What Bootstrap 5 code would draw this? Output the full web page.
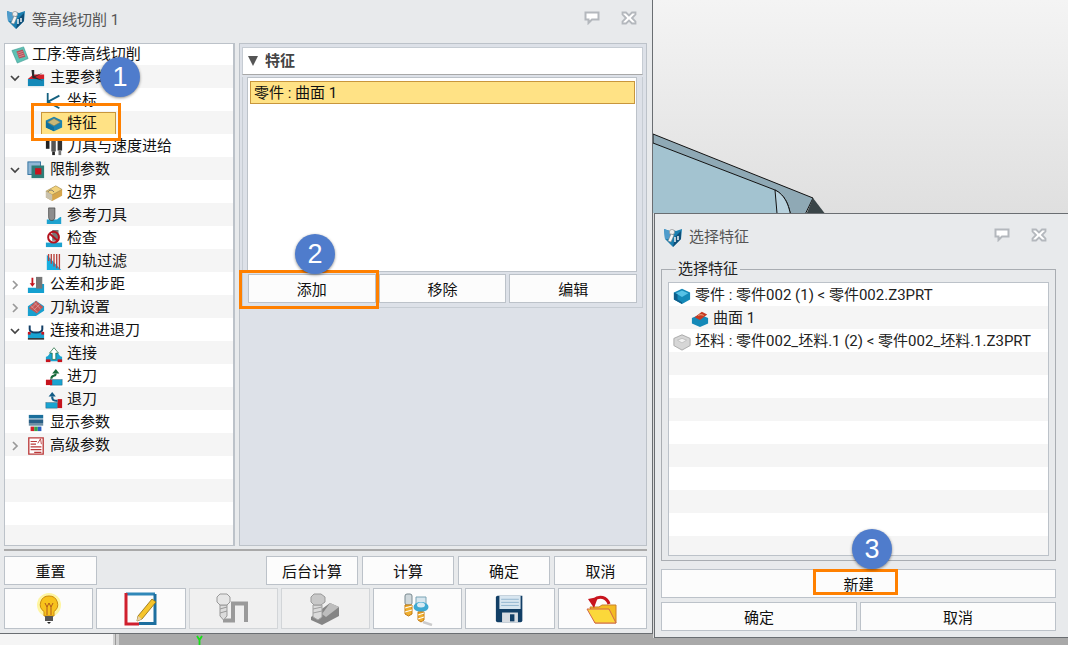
<!DOCTYPE html>
<html lang="zh">
<head>
<meta charset="UTF-8">
<title>等高线切削</title>
<link rel="stylesheet" href="https://cdn.jsdelivr.net/npm/bootstrap@5.3.0/dist/css/bootstrap.min.css">
<style>
body { margin: 0; background: #aaa; font-family: Roboto, "Noto Sans CJK SC", sans-serif; font-size: 15px; color: #111; overflow: hidden; }
.desk { position: relative; width: 1068px; height: 645px; overflow: hidden; background: #a9a9a9; }
.scene { position: absolute; left: 0; top: 0; }
.win { position: absolute; background: #e8eaec; border: 1px solid #6a6e72; }
.win-main { left: -1px; top: -1px; width: 654px; height: 635px; padding: 0 5px 0 4px; }
.win-pick { left: 654px; top: 213px; width: 416px; height: 425px; padding: 0 13px 0 6px; }
.title-main { height: 43px; color: #555; padding-left: 2px; padding-bottom: 5px; gap: 6px; flex-shrink: 0; }
.title-pick { height: 45px; color: #555; padding-left: 2px; gap: 6px; flex-shrink: 0; }
.title-text { padding-top: 2px; }
.title-btns { margin-left: auto; gap: 21px; }
.title-main .title-btns { margin-right: 10px; margin-top: -2px; }
.title-pick .title-btns { margin-right: 9px; margin-top: -3px; }
.tree { width: 231px; height: 503px; background: #fff; border: 1px solid #bcc2c9; border-right-width: 2px; border-radius: 0; overflow: hidden; }
.tree-row { height: 23px; padding: 2px 0 0 0; border: 0; border-radius: 0; background: #fff; color: #111; line-height: 21px; white-space: nowrap; flex-shrink: 0; }
.tree > .tree-row:first-child { height: 21px; padding-top: 0; }
.tree-row:nth-child(even), .pick-list .tree-row:nth-child(even) { background: #f5f5f5; }
.tree-row svg { flex-shrink: 0; }
.lv-root { padding-left: 6px; gap: 3px; }
.lv-one { padding-left: 3px; gap: 5px; }
.lv-one .chev { width: 14px; }
.lv-two { padding-left: 40px; gap: 4px; }
.sel-tag { background: #ffe285; border: 1px solid #c8963c; height: 23px; padding: 0 18px 0 3px; margin-left: -4px; margin-top: 0; line-height: 21px; gap: 4px; }
.panel { width: 408px; height: 503px; background: #dde1e8; border: 1px solid #bcc2c9; padding: 3px 3px 3px 2px; }
.feat-box { height: 231px; border: 1px solid #c6ccd3; border-top: 0; background: #dde1e8; }
.feat-head { height: 28px; background: #fff; border: 1px solid #c6ccd3; border-bottom: 1px solid #a8a8a8; font-weight: 700; color: #444; padding-left: 4px; gap: 6px; }
.feat-list { margin: 2px 5px 0 4px; height: 195px; background: #fff; border: 1px solid #bcc2c9; padding: 3px 1px 3px 2px; }
.feat-item { height: 23px; background: #ffe285; border: 1px solid #c8963c; padding-left: 3px; line-height: 23px; }
.feat-btns { padding: 2px 5px 0 5px; gap: 3px; }
.sw-btn { --bs-btn-padding-y: 0; --bs-btn-padding-x: 0; --bs-btn-font-size: 15px; --bs-btn-border-radius: 0; --bs-btn-border-color: #bcc2c9; --bs-btn-bg: #fcfcfc; --bs-btn-color: #111; height: 29px; line-height: 31px; font-family: inherit; flex-shrink: 0; }
.btn-wide { flex: 1 1 0; }
.rule { height: 2px; background: #a9a9a9; margin: 3px 0 5px 0; flex-shrink: 0; }
.foot-row { gap: 4px; }
.w-reset { width: 93px; margin-right: auto; }
.w-act { width: 92px; }
.w-act:last-child { width: 93px; }
.ico-row { gap: 3px; margin-top: 3px; }
.ico-btn { height: 41px; flex: 1 1 0; line-height: 1; display: flex; align-items: center; justify-content: center; }
.ico-btn.is-off { --bs-btn-disabled-bg: #f0f0f0; --bs-btn-disabled-border-color: #d2d5d8; --bs-btn-disabled-opacity: 1; }
.group-box { width: 395px; height: 302px; border: 1px solid #a9adb2; padding: 2px 6px 2px 6px; flex-shrink: 0; }
.group-box legend { float: none; width: auto; font-size: 15px; padding: 0 2px; margin: 0 0 0 8px; line-height: 21px; color: #222; }
.pick-list { height: 274px; background: #fff; border: 1px solid #bcc2c9; border-radius: 0; overflow: hidden; }
.pick-list .tree-row { padding-left: 4px; gap: 4px; color: #222; }
.pick-list .tree-row.lv-sub { padding-left: 22px; }
.pick-btns { gap: 3px; }
.callout { position: absolute; border: 3px solid #ff8000; pointer-events: none; }
.step { position: absolute; width: 40px; height: 40px; border-radius: 50%; background: #4f7ccc; color: #fff; font: 27px/40px "Liberation Sans", sans-serif; text-align: center; box-shadow: 0 1px 3px rgba(0,0,0,.45); }
.m1 { left: 31px; top: 103px; width: 90px; height: 38px; }
.m2 { left: 239px; top: 270px; width: 140px; height: 39px; }
.m3 { left: 813px; top: 569px; width: 85px; height: 26px; }
.s1 { left: 100px; top: 57px; }
.s2 { left: 295px; top: 234px; }
.s3 { left: 852px; top: 529px; }
</style>
</head>
<body>
<svg width="0" height="0" class="position-absolute">
  <defs>
    <symbol id="i-app" viewBox="0 0 20 20"><path d="M1 2 7 4 10 3 13 4 19 2 18 12 10 20 2 12Z" fill="#1b7fb0"/><path d="M1 2 7 4 8 12 2 12Z" fill="#4f9ccc"/><path d="M12 10 18 4 18 12 10 20Z" fill="#0f4f78"/><circle cx="9" cy="5" r="2.600" fill="#eee" stroke="#888" stroke-width=".6"/><path d="M8 7 11 8 8 15 5 14Z" fill="#f4f4f4" stroke="#777" stroke-width=".5"/><path d="M12 10v5M15 9v4" stroke="#fff" stroke-width="1.400"/></symbol>
    <symbol id="i-bub" viewBox="0 0 16 14"><path d="M1.500 1.500h13v7H8l-3.500 3.500v-3.500h-3Z" fill="#fff" stroke="#b4b8bd" stroke-width="2"/></symbol>
    <symbol id="i-x" viewBox="0 0 16 14"><path d="M1.500 1.500h3.500l3 3 3-3h3.500v2l-3.500 3.500 3.500 3.500v2H11l-3-3-3 3H1.500v-2L5 7 1.500 3.500Z" fill="#fff" stroke="#b4b8bd" stroke-width="1.800"/></symbol>
    <symbol id="i-down" viewBox="0 0 12 12"><path d="M2 4 6 8 10 4" fill="none" stroke="#444" stroke-width="1.700"/></symbol>
    <symbol id="i-right" viewBox="0 0 12 12"><path d="M4 2 8 6 4 10" fill="none" stroke="#999" stroke-width="1.700"/></symbol>
    <symbol id="i-root" viewBox="0 0 20 20"><path d="M1 5 14 1 19 14 7 19Z" fill="#5ec2b4" stroke="#2f8f8a" stroke-width=".6"/><path d="M6 6 13 4 16 12 9 14Z" fill="#b8505a"/><path d="M7 8l6-2M8 10l6-2M9 12l6-2" stroke="#e8b8b8" stroke-width=".6"/></symbol>
    <symbol id="i-main" viewBox="0 0 20 20"><path d="M1 11h18v8H1Z" fill="#1489b8"/><path d="M1 11 7 6h12v5Z" fill="#d3212b"/><path d="M5 1h3v7l10-4-9 5 9 4-12-3Z" fill="#2c2c2c"/></symbol>
    <symbol id="i-axis" viewBox="0 0 20 20"><path d="M3 1v10l13-7M3 11l13 7" fill="none" stroke="#14607f" stroke-width="2"/></symbol>
    <symbol id="i-feat" viewBox="0 0 20 20"><path d="M10 2 19 6v8l-9 4-9-4V6Z" fill="#1b82b0"/><path d="M10 4 17 8 10 12 3 8Z" fill="#c9b878" stroke="#8d7c44" stroke-width=".6"/><path d="M1 6v8l9 4v-4L3 9Z" fill="#0f6f9c"/></symbol>
    <symbol id="i-tool" viewBox="0 0 20 20"><rect x="1" y="2" width="4" height="10" fill="#222"/><rect x="7" y="2" width="5" height="13" fill="#555"/><rect x="8" y="15" width="3" height="4" fill="#222"/><rect x="14" y="2" width="5" height="12" fill="#333"/><rect x="15" y="14" width="3" height="5" fill="#777"/><rect x="1" y="0" width="18" height="2" fill="#aaa"/></symbol>
    <symbol id="i-limit" viewBox="0 0 20 20"><rect x="1" y="1" width="14" height="14" fill="#8fb6d4" stroke="#2b6d9c"/><rect x="5" y="5" width="14" height="14" fill="#2e7d78"/><rect x="9" y="8" width="7" height="7" fill="#c8141e"/></symbol>
    <symbol id="i-bound" viewBox="0 0 20 20"><path d="M1 8 12 2 19 6v7L8 19 1 15Z" fill="#d6a64c"/><path d="M1 8 12 2 19 6 8 12Z" fill="#f2d27c" stroke="#8a7a50" stroke-width=".5"/><path d="M3 9c2-3 5-3 7 0" fill="none" stroke="#666" stroke-width="1"/><path d="M1 8 8 12v7L1 15Z" fill="#c9c2ae"/></symbol>
    <symbol id="i-ref" viewBox="0 0 20 20"><path d="M2 14h10c3 0 3-3 6-3v8H2Z" fill="#1ea2cf"/><path d="M4 1h7v10c0 2-1 4-3.500 4S4 13 4 11Z" fill="#8d8d8d" stroke="#333" stroke-width=".7"/></symbol>
    <symbol id="i-check" viewBox="0 0 20 20"><rect x="8" y="0" width="7" height="12" fill="#777"/><path d="M1 14h18v5H1Z" fill="#1ea2cf"/><circle cx="9.500" cy="8" r="6" fill="none" stroke="#b3121d" stroke-width="2.200"/><path d="M5 4l9 8" stroke="#b3121d" stroke-width="2.200"/></symbol>
    <symbol id="i-filter" viewBox="0 0 20 20"><path d="M2 2 18 19H2Z" fill="#16aee0"/><path d="M4 1v8M7 1v11M10 1v14M13 1v16M16 1v17" stroke="#b8433e" stroke-width="1.500"/></symbol>
    <symbol id="i-tol" viewBox="0 0 20 20"><path d="M1 13h11V9h7v10H1Z" fill="#14a0d0"/><rect x="10" y="1" width="7" height="13" fill="#777"/><path d="M5 2h2v6h2L6 12 3 8h2Z" fill="#c6141e"/></symbol>
    <symbol id="i-set" viewBox="0 0 20 20"><path d="M1 12V8l9-6 9 6v5l-9 6H1Z" fill="#19a0cf"/><path d="M2 10 10 2l8 7-7 7Z" fill="#c25555"/><path d="M5 10l6-6M8 12l6-6M4 7l8 8M8 4l7 7" stroke="#e5a9a9" stroke-width=".7"/></symbol>
    <symbol id="i-link" viewBox="0 0 20 20"><rect x="1" y="12" width="18" height="6" fill="#18a3d2"/><rect x="1" y="18" width="18" height="1.500" fill="#111"/><path d="M3 4v4c0 5 14 5 14 0V4" fill="none" stroke="#133e66" stroke-width="2.200"/><rect x="1" y="11" width="3" height="3" fill="#c6141e"/><rect x="16" y="11" width="3" height="3" fill="#c6141e"/></symbol>
    <symbol id="i-conn" viewBox="0 0 20 20"><path d="M1 18v-5c4 0 4-7 9-7s5 7 9 7v5Z" fill="#19a3d0"/><rect x="1" y="16" width="5" height="3" fill="#c6141e"/><rect x="14" y="16" width="5" height="3" fill="#c6141e"/><path d="M10 3 15 9H12v7H8V9H5Z" fill="#fff" stroke="#176b3b" stroke-width=".8"/></symbol>
    <symbol id="i-in" viewBox="0 0 20 20"><rect x="6" y="13" width="13" height="6" fill="#19a3d0" stroke="#157" stroke-width=".5"/><path d="M1 13h7v6H1Z" fill="#c6141e"/><path d="M7 12c0-5 5-2 5-6" fill="none" stroke="#176b3b" stroke-width="2.400"/><path d="M12 1 16 6H8Z" fill="#176b3b"/></symbol>
    <symbol id="i-out" viewBox="0 0 20 20"><rect x="1" y="13" width="13" height="6" fill="#19a3d0" stroke="#157" stroke-width=".5"/><path d="M14 9h5v10h-5Z" fill="#c6141e"/><path d="M14 11c-5 0-6-1-6-5" fill="none" stroke="#125c86" stroke-width="2.400"/><path d="M8 1 12 6H4Z" fill="#125c86"/></symbol>
    <symbol id="i-show" viewBox="0 0 20 20"><rect x="2" y="1" width="16" height="4" fill="#1b6f9c"/><rect x="2" y="6" width="16" height="4" fill="#2a5f85"/><rect x="2" y="10" width="16" height="3" fill="#6e8fa4"/><rect x="4" y="14" width="4" height="5" fill="#d3212b"/><rect x="8" y="14" width="4" height="5" fill="#3aa34a"/><rect x="12" y="14" width="4" height="5" fill="#2b5fc0"/></symbol>
    <symbol id="i-adv" viewBox="0 0 20 20"><path d="M2 1h16v18H2Z" fill="#fff" stroke="#bb3b3b" stroke-width="1.500"/><path d="M4 5h7M4 8h6M4 11h12M4 14h12M8 17h8" stroke="#bb3b3b" stroke-width="1.300"/><path d="M12 7l3-5 1 6" fill="none" stroke="#bb3b3b"/></symbol>
    <symbol id="i-part" viewBox="0 0 20 20"><path d="M10 2 19 6v8l-9 5-9-5V6Z" fill="#1489b8"/><path d="M10 4 17 7 10 11 3 7Z" fill="#56c1e6"/><path d="M1 6 5 8v6l5 3v2l-9-5Z" fill="#0f5f8c"/></symbol>
    <symbol id="i-surf" viewBox="0 0 20 20"><path d="M1 9 10 5 19 9v6l-9 4-9-4Z" fill="#1489b8"/><path d="M4 8 12 2 18 5 10 11Z" fill="#c83a22"/><path d="M8 6c2-1 4-1 6 0" stroke="#f0c090" fill="none"/></symbol>
    <symbol id="i-blank" viewBox="0 0 20 20"><path d="M10 2 19 6v8l-9 5-9-5V6Z" fill="#d6d6d6" stroke="#a5a5a5"/><path d="M10 6 15 8 10 11 5 8Z" fill="#f2f2f2" stroke="#aaa" stroke-width=".6"/></symbol>
    <symbol id="tri" viewBox="0 0 12 10"><path d="M1 0h10L6 10Z" fill="#555"/></symbol>
  </defs>
</svg>

<div class="desk">
  <!-- viewport behind the dialogs -->
  <svg class="scene" width="1068" height="645" viewBox="0 0 1068 645">
    <defs><linearGradient id="bg" x1="0" y1="0" x2="0" y2="1"><stop offset="0" stop-color="#f4f4f4"/><stop offset="1" stop-color="#dedede"/></linearGradient></defs>
    <rect x="0" y="0" width="1068" height="225" fill="url(#bg)"/>
    <path d="M653 143 775 190 782 225H653Z" fill="#a3c3d0"/>
    <path d="M653 134 813 198 800 225H792C790 205 785 195 775 190L653 143Z" fill="#8fa9b5" stroke="#111" stroke-width="1"/>
    <path d="M775 190 778 225H792C790 205 785 195 775 190Z" fill="#b8d2de" stroke="#111" stroke-width="1"/>
    <path d="M813 198 826 215H806Z" fill="#3a4548"/>
    <rect x="653" y="213" width="3" height="425" fill="#dcdcdc"/>
    <rect x="0" y="634" width="113" height="11" fill="#f5f5f5"/>
    <rect x="113" y="634" width="6" height="11" fill="#d0d0d0"/>
    <path d="M115.500 634v11" stroke="#999"/>
    <path d="M197 636l2.500 4 2.500-4M199.500 640v5" fill="none" stroke="#16e016" stroke-width="1.800"/>
  </svg>

  <div class="win win-main d-flex flex-column">
    <div class="title-main d-flex align-items-center">
      <svg width="20" height="20"><use href="#i-app"/></svg>
      <span class="title-text">等高线切削 1</span>
      <div class="title-btns d-flex">
        <svg width="16" height="14"><use href="#i-bub"/></svg>
        <svg width="16" height="14"><use href="#i-x"/></svg>
      </div>
    </div>
    <div class="d-flex gap-1">
      <div class="tree list-group">
        <div class="list-group-item tree-row d-flex align-items-center lv-root"><svg width="18" height="18"><use href="#i-root"/></svg>工序:等高线切削</div>
        <div class="list-group-item tree-row d-flex align-items-center lv-one"><svg class="chev" width="12" height="12"><use href="#i-down"/></svg><svg width="18" height="18"><use href="#i-main"/></svg>主要参数</div>
        <div class="list-group-item tree-row d-flex align-items-center lv-two"><svg width="18" height="18"><use href="#i-axis"/></svg>坐标</div>
        <div class="list-group-item tree-row d-flex align-items-center lv-two"><span class="sel-tag d-flex align-items-center"><svg width="18" height="18"><use href="#i-feat"/></svg>特征</span></div>
        <div class="list-group-item tree-row d-flex align-items-center lv-two"><svg width="18" height="18"><use href="#i-tool"/></svg>刀具与速度进给</div>
        <div class="list-group-item tree-row d-flex align-items-center lv-one"><svg class="chev" width="12" height="12"><use href="#i-down"/></svg><svg width="18" height="18"><use href="#i-limit"/></svg>限制参数</div>
        <div class="list-group-item tree-row d-flex align-items-center lv-two"><svg width="18" height="18"><use href="#i-bound"/></svg>边界</div>
        <div class="list-group-item tree-row d-flex align-items-center lv-two"><svg width="18" height="18"><use href="#i-ref"/></svg>参考刀具</div>
        <div class="list-group-item tree-row d-flex align-items-center lv-two"><svg width="18" height="18"><use href="#i-check"/></svg>检查</div>
        <div class="list-group-item tree-row d-flex align-items-center lv-two"><svg width="18" height="18"><use href="#i-filter"/></svg>刀轨过滤</div>
        <div class="list-group-item tree-row d-flex align-items-center lv-one"><svg class="chev" width="12" height="12"><use href="#i-right"/></svg><svg width="18" height="18"><use href="#i-tol"/></svg>公差和步距</div>
        <div class="list-group-item tree-row d-flex align-items-center lv-one"><svg class="chev" width="12" height="12"><use href="#i-right"/></svg><svg width="18" height="18"><use href="#i-set"/></svg>刀轨设置</div>
        <div class="list-group-item tree-row d-flex align-items-center lv-one"><svg class="chev" width="12" height="12"><use href="#i-down"/></svg><svg width="18" height="18"><use href="#i-link"/></svg>连接和进退刀</div>
        <div class="list-group-item tree-row d-flex align-items-center lv-two"><svg width="18" height="18"><use href="#i-conn"/></svg>连接</div>
        <div class="list-group-item tree-row d-flex align-items-center lv-two"><svg width="18" height="18"><use href="#i-in"/></svg>进刀</div>
        <div class="list-group-item tree-row d-flex align-items-center lv-two"><svg width="18" height="18"><use href="#i-out"/></svg>退刀</div>
        <div class="list-group-item tree-row d-flex align-items-center lv-one"><span class="chev d-inline-block"></span><svg width="18" height="18"><use href="#i-show"/></svg>显示参数</div>
        <div class="list-group-item tree-row d-flex align-items-center lv-one"><svg class="chev" width="12" height="12"><use href="#i-right"/></svg><svg width="18" height="18"><use href="#i-adv"/></svg>高级参数</div>
        <div class="list-group-item tree-row"></div>
        <div class="list-group-item tree-row"></div>
        <div class="list-group-item tree-row"></div>
        <div class="list-group-item tree-row"></div>
      </div>
      <div class="panel">
        <div class="feat-head d-flex align-items-center"><svg width="12" height="10"><use href="#tri"/></svg>特征</div>
        <div class="feat-box">
          <div class="feat-list"><div class="feat-item">零件 : 曲面 1</div></div>
          <div class="feat-btns d-flex">
            <button type="button" class="btn sw-btn btn-wide">添加</button>
            <button type="button" class="btn sw-btn btn-wide">移除</button>
            <button type="button" class="btn sw-btn btn-wide">编辑</button>
          </div>
        </div>
      </div>
    </div>
    <div class="rule"></div>
    <div class="foot-row d-flex">
      <button type="button" class="btn sw-btn w-reset">重置</button>
      <button type="button" class="btn sw-btn w-act">后台计算</button>
      <button type="button" class="btn sw-btn w-act">计算</button>
      <button type="button" class="btn sw-btn w-act">确定</button>
      <button type="button" class="btn sw-btn w-act">取消</button>
    </div>
    <div class="ico-row d-flex">
      <button type="button" class="btn sw-btn ico-btn">
        <svg width="34" height="34" viewBox="0 0 34 34"><circle cx="17" cy="13" r="12" fill="#fff27a" opacity=".7"/><path d="M17 4a8.500 8.500 0 0 0-5 15.500V24h10v-4.500A8.500 8.500 0 0 0 17 4Z" fill="#f7c21c" stroke="#c98a10"/><path d="M13 11l2 4 2-4 2 4 2-4M15 15v8M19 15v8" fill="none" stroke="#b0581a"/><rect x="13" y="24" width="8" height="5" fill="#555"/><path d="M15 30h4l-2 2Z" fill="#222"/></svg>
      </button>
      <button type="button" class="btn sw-btn ico-btn">
        <svg width="34" height="34" viewBox="0 0 34 34"><path d="M2 2h29" stroke="#2f87b8" stroke-width="3"/><path d="M2 1v31h13" fill="none" stroke="#d0202e" stroke-width="3"/><path d="M15 31.500h16V2" fill="none" stroke="#1d6f9f" stroke-width="3"/><path d="M14 24 28 7l4 3-14 17-5 2Z" fill="#f6c52b" stroke="#8a6a10" stroke-width=".8"/><path d="M13 29l1-5 4 3Z" fill="#e9d3a8"/></svg>
      </button>
      <button type="button" class="btn sw-btn ico-btn is-off" disabled>
        <svg width="34" height="34" viewBox="0 0 34 34"><path d="M7 28.500h10V11.500h13V30" fill="none" stroke="#9a9a9a" stroke-width="4"/><path d="M4 13h7v11l-3.500 4L4 24Z" fill="#dcdcdc" stroke="#999"/><path d="M4 17l7-2M4 21l7-2" stroke="#999"/><path d="M4 2h7l3 3v5l-3 3H4L1 10V5Z" fill="#e6e6e6" stroke="#999"/></svg>
      </button>
      <button type="button" class="btn sw-btn ico-btn is-off" disabled>
        <svg width="34" height="34" viewBox="0 0 34 34"><path d="M3 25 22 11l9 4v9L14 33 3 28Z" fill="#858585"/><path d="M14 22 22 11l9 4-13 10Z" fill="#bdbdbd"/><path d="M5 13h9v12l-4 3-5-3Z" fill="#dadada" stroke="#a0a0a0"/><path d="M5 17l9-2M5 21l9-2" stroke="#a0a0a0"/><path d="M6 2h7l4 3v5l-4 3H6L3 10V5Z" fill="#c8c8c8" stroke="#999"/></svg>
      </button>
      <button type="button" class="btn sw-btn ico-btn">
        <svg width="34" height="34" viewBox="0 0 34 34"><path d="M22 30l9 3" stroke="#ccc" stroke-width="2.500"/><rect x="4" y="2" width="7" height="11" rx="2" fill="#cfd8dc" stroke="#7a8a90"/><path d="M4 13h7v9l-3.500 2L4 22Z" fill="#f0b030" stroke="#c47a10"/><path d="M4 16l7-2M4 20l7-2" stroke="#fff"/><path d="M15 5h10v7l-2 3h-6l-2-3Z" fill="#d7e6ee" stroke="#7aa4b5"/><ellipse cx="20" cy="15" rx="7.500" ry="5" fill="#3fa9d2"/><ellipse cx="20" cy="13" rx="4" ry="2.500" fill="#d7eaf2"/><path d="M17 20h6v8l-3 2-3-2Z" fill="#f0b030" stroke="#c47a10"/><path d="M17 23l6-2M17 27l6-2" stroke="#fff"/></svg>
      </button>
      <button type="button" class="btn sw-btn ico-btn">
        <svg width="30" height="30" viewBox="0 0 34 34"><path d="M3 2h28v28a2 2 0 0 1-2 2H3a2 2 0 0 1-2-2V4a2 2 0 0 1 2-2Z" fill="#123f66"/><rect x="5" y="2" width="24" height="15" fill="#d8e6f0"/><path d="M7 6h20M7 9.500h20M7 13h20" stroke="#8db2cc"/><rect x="8" y="21" width="18" height="11" fill="#d8dde2"/><rect x="17" y="23" width="5" height="8" fill="#123f66"/></svg>
      </button>
      <button type="button" class="btn sw-btn ico-btn">
        <svg width="34" height="34" viewBox="0 0 34 34"><path d="M5 15h9l3-2h14v18H10Z" fill="#f4bc22" stroke="#c9802a"/><path d="M2 17h22l7 14H10Z" fill="#fbd83a" stroke="#d3664a"/><path d="M24 12C22 5 14 3 9 8" fill="none" stroke="#c8141e" stroke-width="3"/><path d="M3 7 13 5 9 16Z" fill="#c8141e"/></svg>
      </button>
    </div>
  </div>

  <div class="win win-pick d-flex flex-column">
    <div class="title-pick d-flex align-items-center">
      <svg width="20" height="20"><use href="#i-app"/></svg>
      <span class="title-text">选择特征</span>
      <div class="title-btns d-flex">
        <svg width="16" height="14"><use href="#i-bub"/></svg>
        <svg width="16" height="14"><use href="#i-x"/></svg>
      </div>
    </div>
    <fieldset class="group-box">
      <legend>选择特征</legend>
      <div class="pick-list list-group">
        <div class="list-group-item tree-row d-flex align-items-center"><svg width="18" height="18"><use href="#i-part"/></svg>零件 : 零件002 (1) &lt; 零件002.Z3PRT</div>
        <div class="list-group-item tree-row d-flex align-items-center lv-sub"><svg width="18" height="18"><use href="#i-surf"/></svg>曲面 1</div>
        <div class="list-group-item tree-row d-flex align-items-center"><svg width="18" height="18"><use href="#i-blank"/></svg>坯料 : 零件002_坯料.1 (2) &lt; 零件002_坯料.1.Z3PRT</div>
        <div class="list-group-item tree-row"></div>
        <div class="list-group-item tree-row"></div>
        <div class="list-group-item tree-row"></div>
        <div class="list-group-item tree-row"></div>
        <div class="list-group-item tree-row"></div>
        <div class="list-group-item tree-row"></div>
        <div class="list-group-item tree-row"></div>
        <div class="list-group-item tree-row"></div>
        <div class="list-group-item tree-row"></div>
      </div>
    </fieldset>
    <div class="pick-btns d-flex mt-2"><button type="button" class="btn sw-btn btn-wide">新建</button></div>
    <div class="pick-btns d-flex mt-1"><button type="button" class="btn sw-btn btn-wide">确定</button><button type="button" class="btn sw-btn btn-wide">取消</button></div>
  </div>

  <div class="callout m1"></div>
  <div class="callout m2"></div>
  <div class="callout m3"></div>
  <div class="step s1">1</div>
  <div class="step s2">2</div>
  <div class="step s3">3</div>
</div>
<script src="https://cdn.jsdelivr.net/npm/bootstrap@5.3.0/dist/js/bootstrap.bundle.min.js"></script>
</body>
</html>
